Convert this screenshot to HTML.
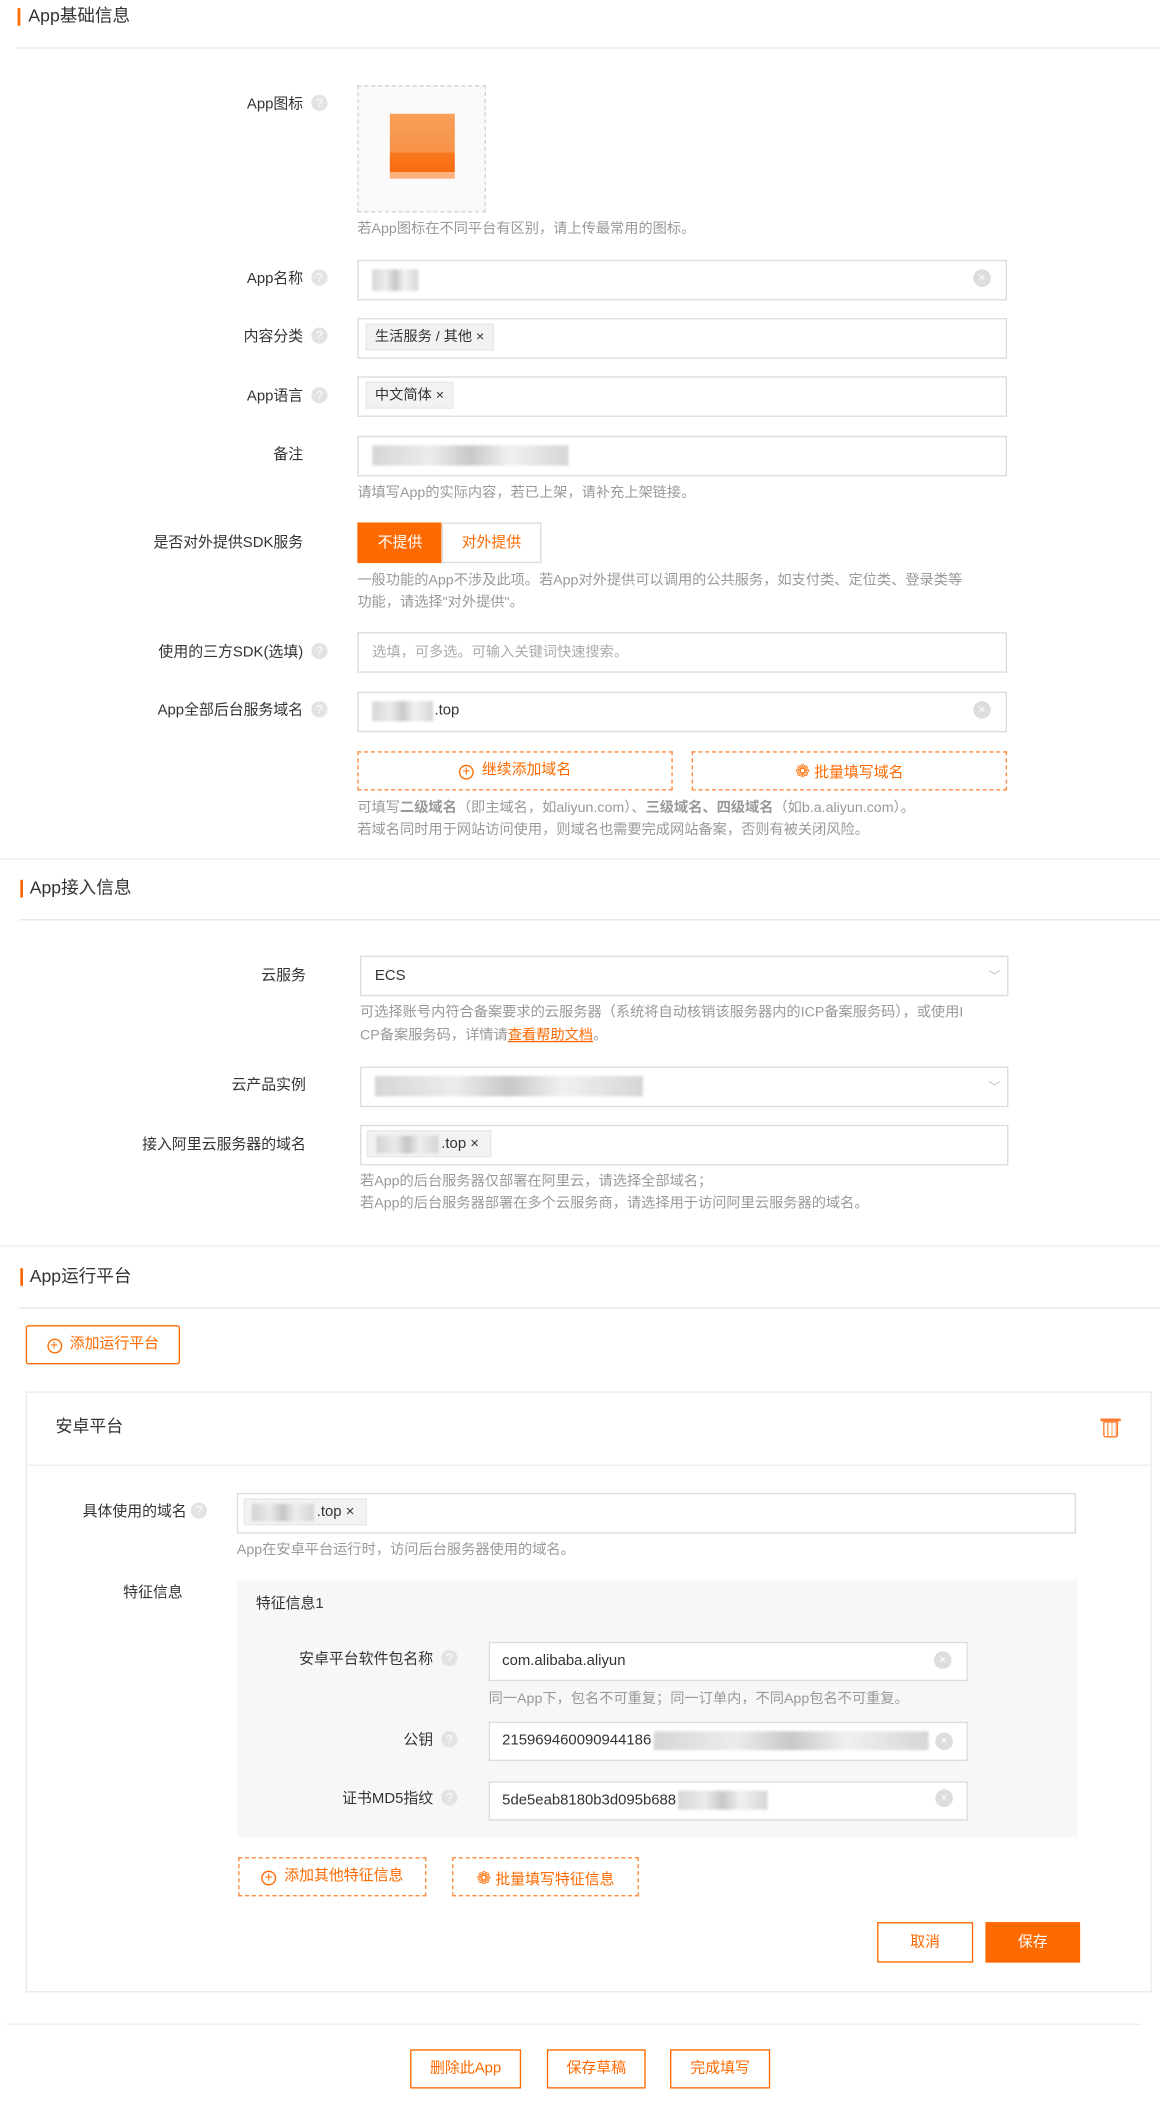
<!DOCTYPE html>
<html><head><meta charset="utf-8"><style>
*{margin:0;padding:0;box-sizing:border-box}
html,body{width:1160px;height:2122px;overflow:hidden;background:#fff}
#w{position:absolute;left:0;top:0;width:857px;height:1568px;transform:scale(1.35356);transform-origin:0 0;font-family:"Liberation Sans","Noto Sans CJK SC",sans-serif;font-size:11px;color:#333}
#w div,#w span{position:absolute}
.h{font-size:13px;color:#333;line-height:16px}
.bar{width:2px;height:13px;background:#ff6a00}
.hr{height:1px;background:#e8e8e8}
.lb{text-align:right;line-height:14px;white-space:nowrap}
.q{width:12px;height:12px;border-radius:50%;background:#e3e3e3;color:#fff;font-size:9px;text-align:center;line-height:12px}
.in{border:1px solid #dcdcdc;background:#fff;height:30px}
.hint{color:#999;line-height:16px;white-space:nowrap;font-size:10.5px}
.tag{background:#f2f2f2;border:1px solid #e8e8e8;height:20px;line-height:18px;padding:0 6px;font-size:10.5px}
.clr{width:13px;height:13px;border-radius:50%;background:#ddd;color:#fff;font-size:9px;text-align:center;line-height:13px}
.blur{background:linear-gradient(90deg,#ccc,#e8e8e8 30%,#bbb 50%,#eee 70%,#ccc);filter:blur(1px);opacity:.8}
.ob{border:1px solid #ff6a00;color:#ff6a00;text-align:center;background:#fff}
.dob{border:1px dashed #ff8a3d;color:#ff6a00;text-align:center}
.pl{display:inline-block;position:relative!important;width:11px;height:11px;border:1px solid #ff6a00;border-radius:50%;font-size:10px;line-height:9px;text-align:center;vertical-align:-1px;margin-right:6px}
</style></head><body><div id="w">
<!-- section 1 -->
<div class="bar" style="left:13px;top:6px"></div>
<div class="h" style="left:21px;top:4px">App基础信息</div>
<div class="hr" style="left:12px;top:35px;width:845px"></div>

<div class="lb" style="right:633px;top:70px">App图标</div><div class="q" style="left:230px;top:70px">?</div>
<div style="left:264px;top:63px;width:95px;height:94px;border:1px dashed #d4d4d4;background:#fafafa"></div>
<div style="left:288px;top:84px;width:48px;height:48px;background:linear-gradient(180deg,#f8a05a 0%,#f79248 60%,#fa7a1e 60%,#f86a10 90%,#fcb07c 90%)"></div>
<div class="hint" style="left:264px;top:161px">若App图标在不同平台有区别，请上传最常用的图标。</div>

<div class="lb" style="right:633px;top:199px">App名称</div><div class="q" style="left:230px;top:199px">?</div>
<div class="in" style="left:264px;top:192px;width:480px"></div>
<div class="blur" style="left:275px;top:199px;width:34px;height:16px"></div>
<div class="clr" style="left:719px;top:199px">×</div>

<div class="lb" style="right:633px;top:242px">内容分类</div><div class="q" style="left:230px;top:242px">?</div>
<div class="in" style="left:264px;top:235px;width:480px"></div>
<div class="tag" style="left:270px;top:239px">生活服务 / 其他 ×</div>

<div class="lb" style="right:633px;top:286px">App语言</div><div class="q" style="left:230px;top:286px">?</div>
<div class="in" style="left:264px;top:278px;width:480px"></div>
<div class="tag" style="left:270px;top:282px">中文简体 ×</div>

<div class="lb" style="right:633px;top:329px">备注</div>
<div class="in" style="left:264px;top:322px;width:480px"></div>
<div class="blur" style="left:275px;top:329px;width:145px;height:15px"></div>
<div class="hint" style="left:264px;top:356px">请填写App的实际内容，若已上架，请补充上架链接。</div>

<div class="lb" style="right:633px;top:394px">是否对外提供SDK服务</div>
<div style="left:264px;top:386px;width:63px;height:30px;background:#ff6a00;color:#fff;text-align:center;line-height:30px">不提供</div>
<div style="left:326px;top:386px;width:74px;height:30px;border:1px solid #dcdcdc;color:#ff6a00;text-align:center;line-height:28px">对外提供</div>
<div class="hint" style="left:264px;top:421px">一般功能的App不涉及此项。若App对外提供可以调用的公共服务，如支付类、定位类、登录类等</div>
<div class="hint" style="left:264px;top:437px">功能，请选择"对外提供"。</div>

<div class="lb" style="right:633px;top:475px">使用的三方SDK(选填)</div><div class="q" style="left:230px;top:475px">?</div>
<div class="in" style="left:264px;top:467px;width:480px"></div>
<div class="hint" style="left:275px;top:474px;color:#aaa">选填，可多选。可输入关键词快速搜索。</div>

<div class="lb" style="right:633px;top:518px">App全部后台服务域名</div><div class="q" style="left:230px;top:518px">?</div>
<div class="in" style="left:264px;top:511px;width:480px"></div>
<div class="blur" style="left:275px;top:518px;width:45px;height:15px"></div>
<div style="left:321px;top:518px;line-height:15px">.top</div>
<div class="clr" style="left:719px;top:518px">×</div>

<div class="dob" style="left:264px;top:555px;width:233px;height:29px;line-height:27px"><span class="pl">+</span>继续添加域名</div>
<div class="dob" style="left:511px;top:555px;width:233px;height:29px;line-height:27px"><span style="position:relative!important;font-size:13px">❁</span> 批量填写域名</div>
<div class="hint" style="left:264px;top:589px">可填写<b>二级域名</b>（即主域名，如aliyun.com）、<b>三级域名、四级域名</b>（如b.a.aliyun.com）。</div>
<div class="hint" style="left:264px;top:605px">若域名同时用于网站访问使用，则域名也需要完成网站备案，否则有被关闭风险。</div>
<div class="hr" style="left:0;top:634px;width:857px;background:#eee"></div>

<!-- section 2 -->
<div class="bar" style="left:15px;top:650px"></div>
<div class="h" style="left:22px;top:648px">App接入信息</div>
<div class="hr" style="left:14px;top:679px;width:843px"></div>

<div class="lb" style="right:631px;top:714px">云服务</div>
<div class="in" style="left:266px;top:706px;width:479px"></div>
<div style="left:277px;top:713px;line-height:16px">ECS</div>
<div style="left:730px;top:714px;color:#bbb;font-size:9px">﹀</div>
<div class="hint" style="left:266px;top:740px">可选择账号内符合备案要求的云服务器（系统将自动核销该服务器内的ICP备案服务码），或使用I</div>
<div class="hint" style="left:266px;top:757px">CP备案服务码，详情请<span style="position:relative!important;color:#ff6a00;text-decoration:underline">查看帮助文档</span>。</div>

<div class="lb" style="right:631px;top:795px">云产品实例</div>
<div class="in" style="left:266px;top:788px;width:479px"></div>
<div class="blur" style="left:277px;top:795px;width:198px;height:15px"></div>
<div style="left:730px;top:796px;color:#bbb;font-size:9px">﹀</div>

<div class="lb" style="right:631px;top:839px">接入阿里云服务器的域名</div>
<div class="in" style="left:266px;top:831px;width:479px"></div>
<div class="tag" style="left:271px;top:835px;width:92px"></div>
<div class="blur" style="left:278px;top:839px;width:46px;height:13px"></div>
<div style="left:326px;top:838px;line-height:15px">.top ×</div>
<div class="hint" style="left:266px;top:865px">若App的后台服务器仅部署在阿里云，请选择全部域名；</div>
<div class="hint" style="left:266px;top:881px">若App的后台服务器部署在多个云服务商，请选择用于访问阿里云服务器的域名。</div>
<div class="hr" style="left:0;top:920px;width:857px;background:#eee"></div>

<!-- section 3 -->
<div class="bar" style="left:15px;top:937px"></div>
<div class="h" style="left:22px;top:935px">App运行平台</div>
<div class="hr" style="left:14px;top:966px;width:843px"></div>
<div class="ob" style="left:19px;top:979px;width:114px;height:29px;line-height:27px;border-radius:2px"><span class="pl">+</span>添加运行平台</div>

<div style="left:19px;top:1028px;width:832px;height:444px;border:1px solid #ebebeb"></div>
<div style="left:41px;top:1046px;font-size:12.5px;line-height:17px">安卓平台</div>
<div style="left:815px;top:1050px;width:11px;height:12px;border:1.3px solid #ff7a2a;border-top-width:1.5px;border-radius:0 0 2px 2px;background:repeating-linear-gradient(90deg,#fff 0 2px,#ffa060 2px 3px)"></div>
<div style="left:813px;top:1048px;width:15px;height:2px;background:#ff7a2a"></div>
<div class="hr" style="left:20px;top:1082px;width:831px;background:#eee"></div>

<div class="lb" style="right:719px;top:1110px">具体使用的域名</div><div class="q" style="left:141px;top:1110px">?</div>
<div class="in" style="left:175px;top:1103px;width:620px"></div>
<div class="tag" style="left:180px;top:1107px;width:91px"></div>
<div class="blur" style="left:186px;top:1111px;width:46px;height:13px"></div>
<div style="left:234px;top:1110px;line-height:15px">.top ×</div>
<div class="hint" style="left:175px;top:1137px">App在安卓平台运行时，访问后台服务器使用的域名。</div>

<div class="lb" style="right:722px;top:1170px">特征信息</div>
<div style="left:175px;top:1167px;width:621px;height:190px;background:#f7f7f7"></div>
<div style="left:189px;top:1178px;line-height:15px">特征信息1</div>
<div class="lb" style="right:537px;top:1219px">安卓平台软件包名称</div><div class="q" style="left:326px;top:1219px">?</div>
<div class="in" style="left:361px;top:1213px;width:354px;height:29px"></div>
<div style="left:371px;top:1220px;line-height:15px">com.alibaba.aliyun</div>
<div class="clr" style="left:690px;top:1220px">×</div>
<div class="hint" style="left:361px;top:1247px">同一App下，包名不可重复；同一订单内，不同App包名不可重复。</div>
<div class="lb" style="right:537px;top:1279px">公钥</div><div class="q" style="left:326px;top:1279px">?</div>
<div class="in" style="left:361px;top:1272px;width:354px;height:29px"></div>
<div style="left:371px;top:1279px;line-height:15px">215969460090944186</div>
<div class="blur" style="left:483px;top:1279px;width:203px;height:14px"></div>
<div class="clr" style="left:691px;top:1280px">×</div>
<div class="lb" style="right:537px;top:1322px">证书MD5指纹</div><div class="q" style="left:326px;top:1322px">?</div>
<div class="in" style="left:361px;top:1316px;width:354px;height:29px"></div>
<div style="left:371px;top:1323px;line-height:15px">5de5eab8180b3d095b688</div>
<div class="blur" style="left:501px;top:1323px;width:66px;height:14px"></div>
<div class="clr" style="left:691px;top:1322px">×</div>

<div class="dob" style="left:176px;top:1372px;width:139px;height:29px;line-height:27px"><span class="pl">+</span>添加其他特征信息</div>
<div class="dob" style="left:334px;top:1372px;width:138px;height:29px;line-height:29px"><span style="position:relative!important;font-size:13px">❁</span> 批量填写特征信息</div>
<div class="ob" style="left:648px;top:1420px;width:71px;height:30px;line-height:28px">取消</div>
<div style="left:728px;top:1420px;width:70px;height:30px;line-height:30px;background:#ff6a00;color:#fff;text-align:center">保存</div>

<div class="hr" style="left:5px;top:1495px;width:838px;background:#eee"></div>
<div class="ob" style="left:303px;top:1514px;width:82px;height:29px;line-height:27px">删除此App</div>
<div class="ob" style="left:404px;top:1514px;width:73px;height:29px;line-height:27px">保存草稿</div>
<div class="ob" style="left:495px;top:1514px;width:74px;height:29px;line-height:27px">完成填写</div>
</div></body></html>
